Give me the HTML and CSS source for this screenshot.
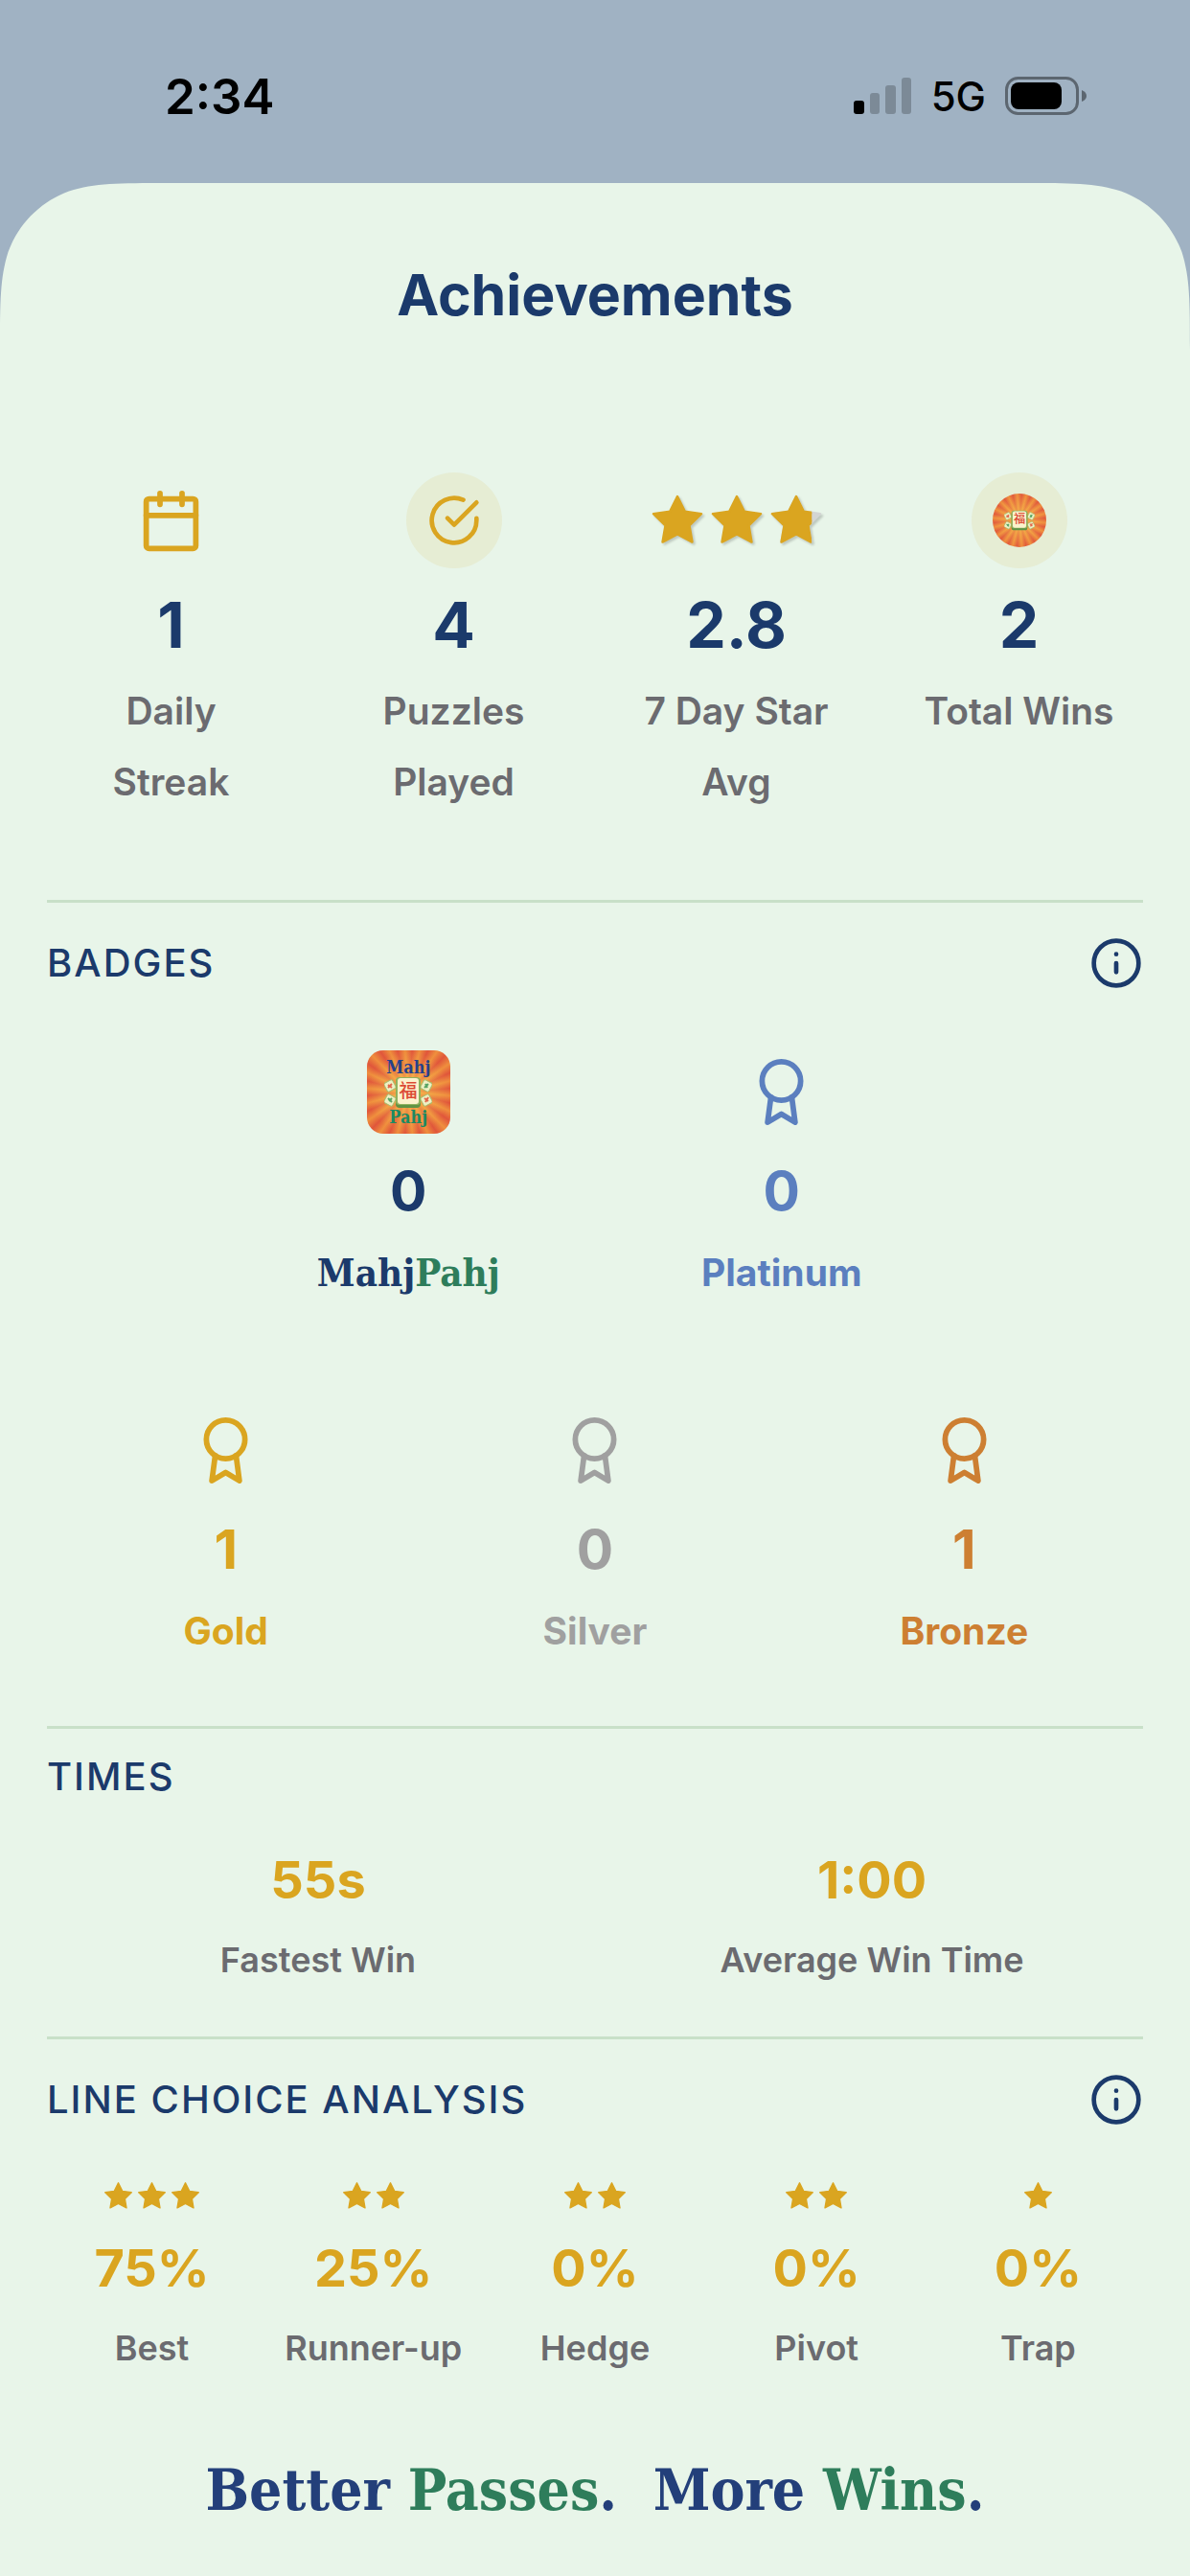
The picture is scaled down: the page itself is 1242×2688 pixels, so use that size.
FILE: index.html
```
<!DOCTYPE html>
<html lang="en">
  <head>
    <meta charset="utf-8" />
    <title>Achievements</title>
    <link rel="stylesheet" href="styles.css">
  </head>
  <body>
    <!-- shared icons -->
    <svg class="defs" aria-hidden="true">
      <symbol id="star" viewBox="0 0 24 24">
        <path stroke-linejoin="round" d="M12 2l3.09 6.26L22 9.27l-5 4.87 1.18 6.88L12 17.77l-6.18 3.25L7 14.14 2 9.27l6.91-1.01z" />
      </symbol>
      <symbol id="award" viewBox="0 0 24 24">
        <circle cx="12" cy="8" r="7" />
        <path d="M8.21 13.89L7 23l5-3 5 3-1.21-9.12" />
      </symbol>
      <symbol id="info" viewBox="0 0 24 24">
        <circle cx="12" cy="12" r="10" />
        <path d="M12 16v-4M12 8h.01" />
      </symbol>
      <symbol id="corner" viewBox="0 0 174 174">
        <path d="M0 0V174C0 124 0 99 8.5 72C19.3 42.5 42.5 19.3 72 8.5C99 0 124 0 174 0Z" />
      </symbol>
      <symbol id="tiles" viewBox="0 0 50 34">
        <g fill="#eef0c4" stroke="#a9bd6c">
          <rect x="1" y="5" width="10" height="10" rx="2" transform="rotate(-28 6 10)" />
          <rect x="39" y="5" width="10" height="10" rx="2" transform="rotate(28 44 10)" />
          <rect x="1" y="20" width="10" height="10" rx="2" transform="rotate(28 6 25)" />
          <rect x="39" y="20" width="10" height="10" rx="2" transform="rotate(-28 44 25)" />
        </g>
        <g fill="none" stroke-width="2">
          <path stroke="#e2664a" d="M4 9l4 3M8 8l-4 4M42 23l4 3M46 22l-3 5" />
          <path stroke="#58a565" d="M42 12l4-4M43 8l2 4M4 23l4 4M8 23l-3 3" />
        </g>
        <rect x="12" y="2" width="26" height="31" rx="4" fill="#5f9344" />
        <rect x="12" y="1" width="26" height="29" rx="4" fill="#8fb25f" />
        <rect x="14" y="2" width="22" height="27" rx="3" fill="#fbf2cc" />
        <text class="tile-char" x="25" y="22" text-anchor="middle">福</text>
      </symbol>
    </svg>

    <div class="status-bar">
      <span class="clock">2:34</span>
      <div class="indicators">
        <svg class="signal" viewBox="0 0 61 40">
          <rect x="0" y="25" width="11" height="14" rx="3" />
          <g opacity="0.22">
            <rect x="17" y="17" width="10" height="22" rx="3" />
            <rect x="33" y="9" width="11" height="30" rx="3" />
            <rect x="50" y="1" width="10" height="38" rx="3" />
          </g>
        </svg>
        <span class="network">5G</span>
        <svg class="battery" viewBox="0 0 86 40">
          <g opacity="0.42">
            <rect x="1.5" y="1.5" width="74" height="37" rx="12" fill="none" stroke="#000" stroke-width="3" />
            <path d="M80 14q5 2 5 6t-5 6z" />
          </g>
          <rect x="6" y="6" width="53" height="28" rx="8" />
        </svg>
      </div>
    </div>

    <main class="sheet">
      <svg class="corner"><use href="#corner" /></svg>
      <svg class="corner corner-right"><use href="#corner" /></svg>

      <h1>Achievements</h1>

      <section class="stats">
        <div class="stat">
          <div class="stat-icon">
            <svg class="icon" viewBox="0 0 24 24">
              <rect x="3" y="4" width="18" height="18" rx="1" />
              <path d="M16 2v4M8 2v4M3 10h18" />
            </svg>
          </div>
          <div class="stat-value">1</div>
          <div class="stat-label">Daily<br />Streak</div>
        </div>
        <div class="stat">
          <div class="stat-icon round">
            <svg class="icon check" viewBox="0 0 24 24">
              <path d="M22 11.08V12a10 10 0 1 1-5.93-9.14" />
              <path d="M22 4L12 14.01l-3-3" />
            </svg>
          </div>
          <div class="stat-value">4</div>
          <div class="stat-label">Puzzles<br />Played</div>
        </div>
        <div class="stat">
          <div class="stat-icon rating">
            <svg class="star"><use href="#star" /></svg>
            <svg class="star"><use href="#star" /></svg>
            <svg class="star partial" viewBox="0 0 24 24">
              <clipPath id="part"><rect width="18.5" height="24" /></clipPath>
              <use class="empty" href="#star" />
              <use href="#star" clip-path="url(#part)" />
            </svg>
          </div>
          <div class="stat-value">2.8</div>
          <div class="stat-label">7 Day Star<br />Avg</div>
        </div>
        <div class="stat">
          <div class="stat-icon round">
            <div class="burst coin">
              <svg class="tiles"><use href="#tiles" /></svg>
            </div>
          </div>
          <div class="stat-value">2</div>
          <div class="stat-label">Total Wins</div>
        </div>
      </section>

      <section class="badges">
        <div class="section-head">
          <h2>BADGES</h2>
          <button class="info" aria-label="About badges"><svg><use href="#info" /></svg></button>
        </div>
        <div class="badge-row top-row">
          <div class="badge mahjpahj">
            <div class="badge-icon">
              <div class="burst app-icon">
                <span class="app-top">Mahj</span>
                <svg class="tiles"><use href="#tiles" /></svg>
                <span class="app-bottom">Pahj</span>
              </div>
            </div>
            <div class="badge-value">0</div>
            <div class="badge-label brand">Mahj<span>Pahj</span></div>
          </div>
          <div class="badge platinum">
            <div class="badge-icon"><svg class="icon"><use href="#award" /></svg></div>
            <div class="badge-value">0</div>
            <div class="badge-label">Platinum</div>
          </div>
        </div>
        <div class="badge-row">
          <div class="badge gold">
            <div class="badge-icon"><svg class="icon"><use href="#award" /></svg></div>
            <div class="badge-value">1</div>
            <div class="badge-label">Gold</div>
          </div>
          <div class="badge silver">
            <div class="badge-icon"><svg class="icon"><use href="#award" /></svg></div>
            <div class="badge-value">0</div>
            <div class="badge-label">Silver</div>
          </div>
          <div class="badge bronze">
            <div class="badge-icon"><svg class="icon"><use href="#award" /></svg></div>
            <div class="badge-value">1</div>
            <div class="badge-label">Bronze</div>
          </div>
        </div>
      </section>

      <section class="times">
        <h2>TIMES</h2>
        <div class="metrics">
          <div class="metric">
            <div class="metric-value">55s</div>
            <div class="metric-label">Fastest Win</div>
          </div>
          <div class="metric">
            <div class="metric-value">1:00</div>
            <div class="metric-label">Average Win Time</div>
          </div>
        </div>
      </section>

      <section class="choices">
        <div class="section-head">
          <h2>LINE CHOICE ANALYSIS</h2>
          <button class="info" aria-label="About line choice analysis"><svg><use href="#info" /></svg></button>
        </div>
        <div class="metrics">
          <div class="metric">
            <div class="mini-stars">
              <svg><use href="#star" /></svg>
              <svg><use href="#star" /></svg>
              <svg><use href="#star" /></svg>
            </div>
            <div class="metric-value">75%</div>
            <div class="metric-label">Best</div>
          </div>
          <div class="metric">
            <div class="mini-stars">
              <svg><use href="#star" /></svg>
              <svg><use href="#star" /></svg>
            </div>
            <div class="metric-value">25%</div>
            <div class="metric-label">Runner-up</div>
          </div>
          <div class="metric">
            <div class="mini-stars">
              <svg><use href="#star" /></svg>
              <svg><use href="#star" /></svg>
            </div>
            <div class="metric-value">0%</div>
            <div class="metric-label">Hedge</div>
          </div>
          <div class="metric">
            <div class="mini-stars">
              <svg><use href="#star" /></svg>
              <svg><use href="#star" /></svg>
            </div>
            <div class="metric-value">0%</div>
            <div class="metric-label">Pivot</div>
          </div>
          <div class="metric">
            <div class="mini-stars">
              <svg><use href="#star" /></svg>
            </div>
            <div class="metric-value">0%</div>
            <div class="metric-label">Trap</div>
          </div>
        </div>
      </section>

      <p class="tagline">Better <span>Passes</span>.&nbsp; More <span>Wins</span>.</p>
    </main>
  </body>
</html>
```

FILE: styles.css
```
:root {
  --backdrop: #a0b2c3;
  --sheet: #e8f5e9;
  --line: #c8e0c8;
  --navy: #1b3a6b;
  --gold: #daa520;
  --green: #2e7d5b;
  --gray: #6b6b70;
}

* {
  box-sizing: border-box;
}

body {
  margin: 0;
  min-height: 100vh;
  display: flex;
  flex-direction: column;
  background: var(--backdrop);
  font-family: Inter, "Liberation Sans", sans-serif;
}

svg {
  display: block;
}

.defs {
  display: none;
}

.status-bar {
  display: flex;
  justify-content: space-between;
  align-items: center;
  height: 191px;
  padding: 9px 107px 0 172px;
}

.clock {
  font-size: 51px;
  font-weight: 600;
}

.indicators {
  display: flex;
  align-items: center;
  gap: 20px;
}

.signal {
  width: 61px;
  height: 40px;
}

.network {
  font-size: 42px;
  font-weight: 500;
}

.battery {
  width: 86px;
  height: 40px;
}

.sheet {
  position: relative;
  flex: 1;
  padding: 81px 49px 0;
  background: var(--sheet);
  color: var(--navy);
  text-align: center;
}

/* smooth corners, painted over the top of the sheet */
.corner {
  position: absolute;
  top: 0;
  left: 0;
  width: 174px;
  height: 174px;
  fill: var(--backdrop);
}

.corner-right {
  left: auto;
  right: 0;
  transform: scaleX(-1);
}

h1 {
  margin: 0;
  font-size: 59px;
  line-height: 72px;
  font-weight: 700;
}

h2 {
  margin: 0;
  font-size: 40px;
  line-height: 48px;
  font-weight: 500;
  letter-spacing: 2px;
  text-align: left;
}

section {
  border-bottom: 3px solid var(--line);
}

.icon {
  width: 69px;
  height: 69px;
  fill: none;
  stroke: currentColor;
  stroke-width: 2;
  stroke-linecap: round;
  stroke-linejoin: round;
}

.stats {
  display: grid;
  grid-template-columns: repeat(4, 1fr);
  gap: 36px;
  padding: 149px 0 86px;
}

.stat-icon {
  display: flex;
  align-items: center;
  justify-content: center;
  height: 100px;
  color: var(--gold);
}

.round {
  width: 100px;
  margin: 0 auto;
  border-radius: 50%;
  background: rgba(218, 165, 32, 0.1);
}

.check {
  width: 56px;
  height: 56px;
}

.rating {
  gap: 2px;
}

.star {
  width: 60px;
  height: 60px;
  fill: var(--gold);
  stroke: var(--gold);
  filter: drop-shadow(2px 2px 1px rgba(0, 0, 0, 0.18));
}

.empty {
  fill: #d3d5d3;
  stroke: #d3d5d3;
}

.stat-value {
  margin: 19px 0 13px;
  font-size: 66px;
  line-height: 80px;
  font-weight: 700;
}

.stat-label {
  font-size: 39px;
  line-height: 74px;
  font-weight: 600;
  color: var(--gray);
  white-space: nowrap;
}

.burst {
  display: flex;
  flex-direction: column;
  align-items: center;
  justify-content: center;
  overflow: hidden;
  background:
    radial-gradient(circle, rgba(248, 196, 80, 0.9), rgba(245, 170, 65, 0) 70%),
    repeating-conic-gradient(from 5deg, #e0563b 0deg, #ef8f3d 10deg, #e0563b 20deg);
}

.coin {
  width: 56px;
  height: 56px;
  border-radius: 50%;
}

.coin .tiles {
  width: 32px;
  height: 22px;
}

.tile-char {
  font-family: "Noto Sans CJK SC", sans-serif;
  font-size: 19px;
  font-weight: 500;
  fill: #dc4a35;
}

.app-icon {
  width: 87px;
  height: 87px;
  border-radius: 17px;
  font-family: "DejaVu Serif Condensed", "DejaVu Serif", serif;
  font-size: 18px;
  line-height: 18px;
  font-weight: 700;
}

.app-icon .tiles {
  width: 50px;
  height: 34px;
}

.app-top {
  color: #26418a;
}

.app-bottom {
  color: #1c8a62;
}

.section-head {
  display: flex;
  align-items: center;
  justify-content: space-between;
  padding-top: 35px;
}

.info {
  padding: 0;
  border: none;
  background: none;
  color: inherit;
  cursor: pointer;
}

.info svg {
  width: 56px;
  height: 56px;
  fill: none;
  stroke: currentColor;
  stroke-width: 2;
  stroke-linecap: round;
}

.badges {
  padding-bottom: 75px;
}

.badge-row {
  display: grid;
  grid-template-columns: repeat(3, 1fr);
  gap: 12px;
}

.top-row {
  grid-template-columns: 33% 33%;
  justify-content: center;
  margin: 63px 0 118px;
}

.badge-icon {
  display: flex;
  align-items: center;
  justify-content: center;
  height: 87px;
}

.badge-value {
  margin: 25px 0 26px;
  font-size: 57px;
  line-height: 70px;
  font-weight: 700;
}

.badge-label {
  font-size: 39px;
  line-height: 48px;
  font-weight: 700;
}

.brand,
.tagline {
  font-family: "DejaVu Serif Condensed", "DejaVu Serif", serif;
  font-weight: 700;
}

.brand {
  font-size: 40px;
}

.brand span,
.tagline span {
  color: var(--green);
}

.platinum {
  color: #5b7fbf;
}

.gold {
  color: var(--gold);
}

.silver {
  color: #a0a0a0;
}

.bronze {
  color: #cd7f32;
}

.times {
  padding: 26px 0 58px;
}

.metrics {
  display: grid;
  grid-auto-flow: column;
  grid-auto-columns: 1fr;
  gap: 12px;
}

.times .metrics {
  margin-top: 51px;
}

.metric-value {
  margin-bottom: 28px;
  font-size: 54px;
  line-height: 66px;
  font-weight: 700;
  color: var(--gold);
}

.metric-label {
  font-size: 36px;
  line-height: 44px;
  font-weight: 600;
  color: var(--gray);
}

.choices {
  border-bottom: none;
}

.choices .metrics {
  margin-top: 56px;
}

.mini-stars {
  display: flex;
  justify-content: center;
  gap: 2px;
  margin-bottom: 26px;
}

.mini-stars svg {
  width: 33px;
  height: 33px;
  fill: var(--gold);
  stroke: var(--gold);
}

.tagline {
  margin: 91px 0 0;
  font-size: 60px;
  line-height: 70px;
  color: #233f7a;
}
```
